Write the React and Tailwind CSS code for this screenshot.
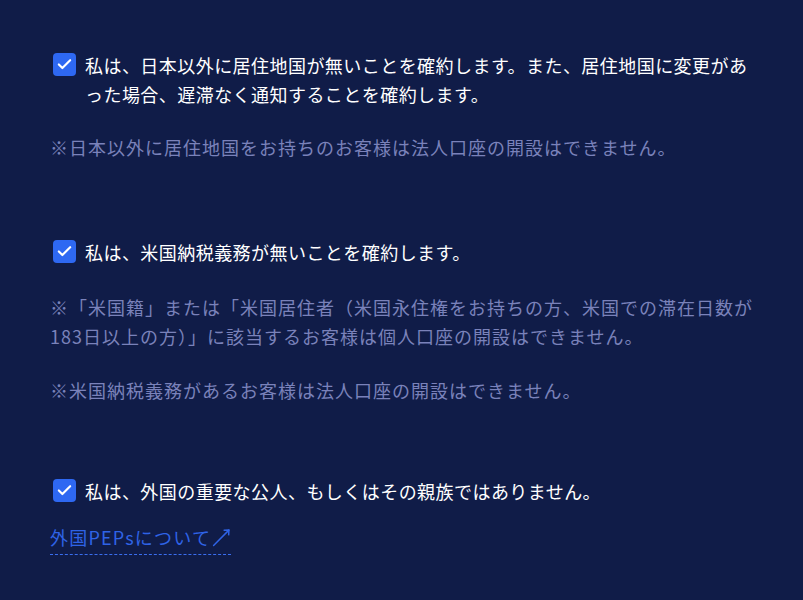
import { Check } from 'lucide-react'

const FONT = { fontFamily: '"Noto Sans CJK JP", "Noto Sans", sans-serif' }

function CheckRow({ children }) {
  return (
    <label className="flex items-start gap-[9px] text-[18px] leading-[1.6] tracking-[0.45px] text-white">
      <span className="mt-[2px] ml-[3px] flex h-[23px] w-[23px] shrink-0 items-center justify-center rounded-[4px] bg-[#2e68f2]">
        <Check className="h-[17px] w-[17px] text-white" strokeWidth={3} />
      </span>
      <span>{children}</span>
    </label>
  )
}

function Note({ children, className = '' }) {
  return (
    <p className={`text-[18px] leading-[1.6] tracking-[1px] text-[#7a82ba] ${className}`}>{children}</p>
  )
}

export default function App() {
  return (
    <div className="min-h-[600px] bg-[#101c48] pt-[51px] pr-[41px] pl-[50px] pb-10" style={FONT}>
      {/* 居住地国 */}
      <section>
        <CheckRow>
          私は、日本以外に居住地国が無いことを確約します。また、居住地国に変更があった場合、遅滞なく通知することを確約します。
        </CheckRow>
        <Note className="mt-6">※日本以外に居住地国をお持ちのお客様は法人口座の開設はできません。</Note>
      </section>

      {/* 米国納税義務 */}
      <section className="mt-[77px]">
        <CheckRow>私は、米国納税義務が無いことを確約します。</CheckRow>
        <Note className="mt-[26px]">
          ※「米国籍」または「米国居住者（米国永住権をお持ちの方、米国での滞在日数が183日以上の方）」に該当するお客様は個人口座の開設はできません。
        </Note>
        <Note className="mt-[25px]">※米国納税義務があるお客様は法人口座の開設はできません。</Note>
      </section>

      {/* 外国PEPs */}
      <section className="mt-[72px]">
        <CheckRow>私は、外国の重要な公人、もしくはその親族ではありません。</CheckRow>
        <a
          href="#"
          className="mt-[18px] inline-flex items-center border-b border-dashed border-[#3a6ef0] pb-[2px] text-[18px] leading-[1.6] tracking-[1.2px] text-[#2f63e6]"
        >
          外国PEPsについて
          <svg viewBox="0 0 18 18" className="ml-[1px] h-[19px] w-[19px]" fill="none" stroke="currentColor" strokeWidth="1.4" strokeLinecap="round" strokeLinejoin="round">
            <path d="M1.5 16.5 L16 2" />
            <path d="M11.5 2.2 L16 2 L15.8 6.5" />
          </svg>
        </a>
      </section>
    </div>
  )
}
